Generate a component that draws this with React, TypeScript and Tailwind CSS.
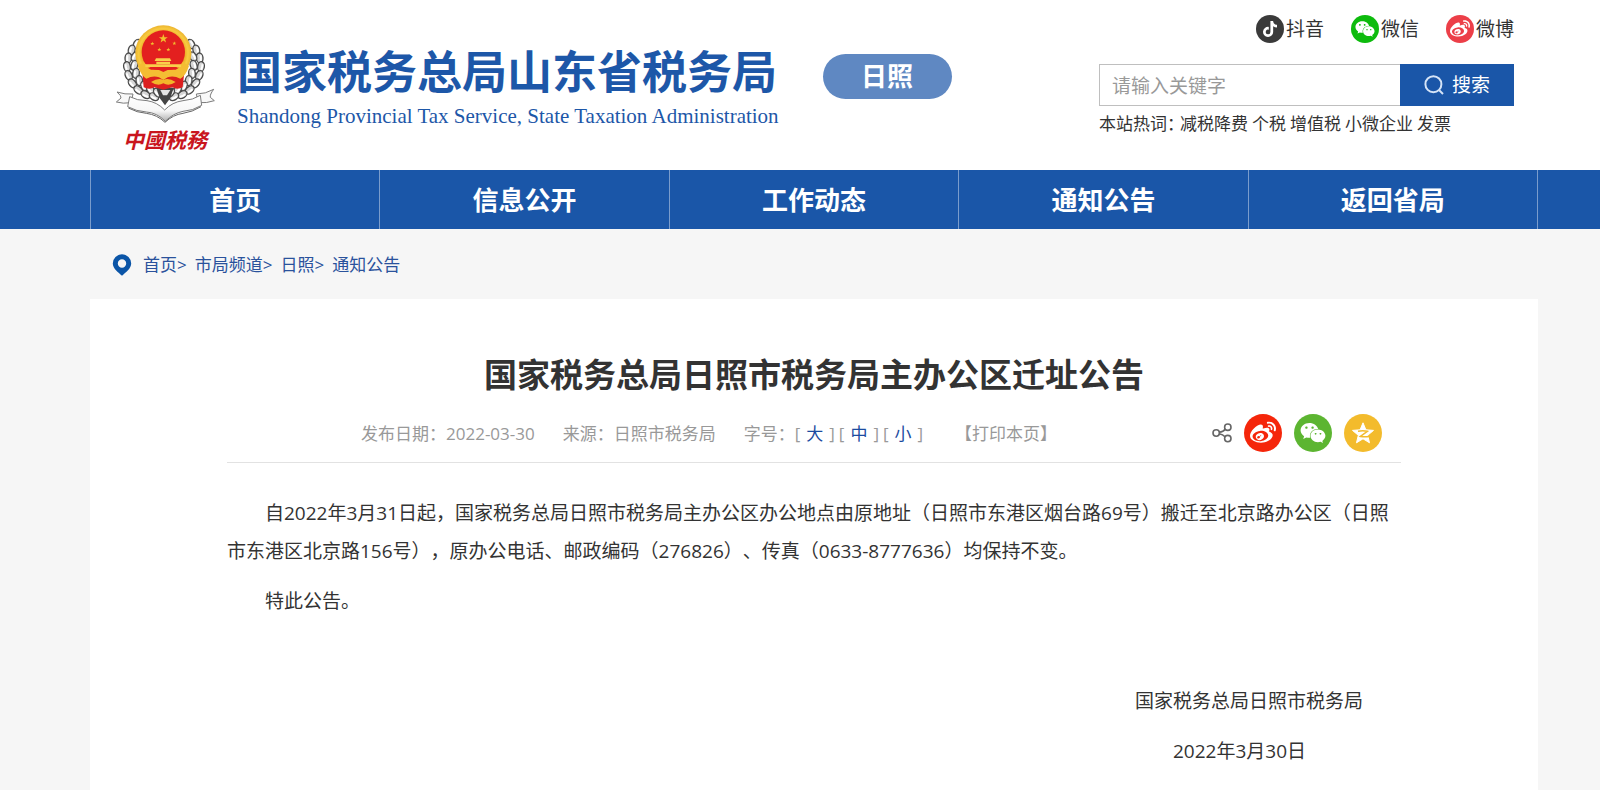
import type { ReactNode } from 'react';
import { FaTiktok, FaWeibo, FaWeixin } from 'react-icons/fa';

const NAV_ITEMS = ['首页', '信息公开', '工作动态', '通知公告', '返回省局'];
const HOT_WORDS = ['减税降费', '个税', '增值税', '小微企业', '发票'];
const CRUMBS = ['首页', '市局频道', '日照', '通知公告'];
const FONT_SIZES = ['大', '中', '小'];

const SOCIALS = [
  { label: '抖音', color: 'bg-[#3a3a3a]', icon: <FaTiktok className="w-4 h-4" /> },
  { label: '微信', color: 'bg-[#0dbb0d]', icon: <FaWeixin className="w-5 h-5" /> },
  { label: '微博', color: 'bg-[#ec3f48]', icon: <FaWeibo className="w-5 h-5" /> },
];

// 麦穗：左侧的坐标，右侧镜像
const LEAVES = [
  { x: 112, y: 100, r: 28 },
  { x: 96, y: 118, r: 14 },
  { x: 86, y: 142, r: 4 },
  { x: 106, y: 138, r: 30 },
  { x: 82, y: 168, r: -10 },
  { x: 104, y: 164, r: 18 },
  { x: 87, y: 194, r: -24 },
  { x: 109, y: 188, r: 8 },
  { x: 98, y: 218, r: -38 },
  { x: 119, y: 210, r: -6 },
  { x: 116, y: 238, r: -50 },
  { x: 134, y: 226, r: -20 },
  { x: 138, y: 252, r: -60 },
  { x: 153, y: 238, r: -34 },
  { x: 163, y: 258, r: -60 },
  { x: 174, y: 246, r: -40 },
];

const STAR = '0,-14 3.3,-4.5 13.3,-4.3 5.3,1.7 8.2,11.3 0,5.6 -8.2,11.3 -5.3,1.7 -13.3,-4.3 -3.3,-4.5';

const Wheat = () => (
  <g>
    {LEAVES.map((l) => (
      <g key={`${l.x}-${l.y}`} transform={`translate(${l.x} ${l.y}) rotate(${l.r})`}>
        <ellipse rx="10" ry="15" fill="#d6d6d6" stroke="#4a4a4a" strokeWidth="4" />
        <path d="M-3 -8 Q-5 0 -2 9" fill="none" stroke="#fff" strokeWidth="6" />
      </g>
    ))}
  </g>
);

const Emblem = () => (
  <svg viewBox="46 40 300 300" className="w-[100px] h-[100px]" aria-hidden="true">
    <defs>
      <linearGradient id="ribbon" x1="0" y1="0" x2="0" y2="1">
        <stop offset="0" stopColor="#ffffff" />
        <stop offset="0.6" stopColor="#f6f6f6" />
        <stop offset="1" stopColor="#b0b0b0" />
      </linearGradient>
      <radialGradient id="gold" gradientUnits="userSpaceOnUse" cx="191" cy="128" r="86">
        <stop offset="0.72" stopColor="#eaa520" />
        <stop offset="0.86" stopColor="#f8cb40" />
        <stop offset="1" stopColor="#eab02c" />
      </radialGradient>
    </defs>
    <Wheat />
    <g transform="translate(386 0) scale(-1 1)">
      <Wheat />
    </g>
    <path d="M170 232 H222 L212 262 L196 284 L180 262Z" fill="#444" />
    <path d="M182 238 L190 254 H202 L212 238Z" fill="#e4e4e4" />
    <circle cx="191" cy="128" r="84" fill="url(#gold)" />
    <path d="M128 184 Q190 200 254 184 L249 230 Q232 238 218 230 L191 237 L164 230 Q150 238 132 230Z" fill="#dc1f1f" />
    <circle cx="191" cy="124" r="65" fill="#e3201f" />
    <path d="M114 166 L132 154 Q150 178 178 178 L191 184 L204 178 Q232 178 250 154 L268 166 Q258 196 242 204 Q222 194 204 200 L191 208 L178 200 Q160 194 140 204 Q124 194 114 166Z" fill="#f4bd33" />
    <path d="M154 214 Q176 200 191 208 Q206 200 228 214 Q208 228 191 218 Q174 228 154 214Z" fill="#f2b52a" />
    <path d="M165 151 L169 143 H211 L215 151Z M170 153 H211 V160 H170Z M137 161 H244 V169 H137Z" fill="#f9cf4a" />
    <path d="M144 171 H238 L228 177 H154Z" fill="#e3201f" />
    <g fill="#f2c02e">
      <polygon points={STAR} transform="translate(191 84)" />
      <polygon points={STAR} transform="translate(158 99) scale(.45)" />
      <polygon points={STAR} transform="translate(224 98) scale(.45)" />
      <polygon points={STAR} transform="translate(179 117) scale(.45)" />
      <polygon points={STAR} transform="translate(206 117) scale(.45)" />
    </g>
    <g stroke="#7c7c7c" strokeWidth="3" strokeLinejoin="round">
      <path d="M100 250 Q76 252 52 244 Q66 256 64 262 L50 274 Q70 280 94 276Z" fill="#f8f8f8" />
      <path d="M290 250 Q318 250 342 236 Q330 252 332 260 L344 270 Q322 278 296 276Z" fill="#f8f8f8" />
      <path
        d="M90 258 Q112 270 142 270 Q172 274 195 298 Q218 274 250 270 Q280 268 302 254 L306 284 Q280 300 250 302 Q220 308 197 332 Q172 306 140 304 Q110 302 84 288Z"
        fill="url(#ribbon)"
      />
      <path d="M86 292 Q112 306 140 308 Q172 312 196 335" fill="none" stroke="#666" />
      <path d="M304 288 Q278 304 250 308 Q220 312 196 335" fill="none" stroke="#666" />
    </g>
  </svg>
);

const PinIcon = () => (
  <svg viewBox="0 0 20 22" className="w-5 h-[22px] shrink-0" aria-hidden="true">
    <path
      fillRule="evenodd"
      fill="#0b55a7"
      d="M10 0.3a9.2 9.2 0 0 0-9.2 9.2c0 5.2 5.4 8.6 9.2 12.3 3.8-3.7 9.2-7.1 9.2-12.3A9.2 9.2 0 0 0 10 .3Zm0 5a4.2 4.2 0 1 1 0 8.4 4.2 4.2 0 0 1 0-8.4Z"
    />
  </svg>
);

const ShareIcon = () => (
  <svg viewBox="0 0 20 20" className="w-5 h-5" fill="none" stroke="#666" strokeWidth="1.6" aria-hidden="true">
    <circle cx="4.2" cy="10" r="3.2" />
    <circle cx="15.8" cy="4.2" r="3.2" />
    <circle cx="15.8" cy="15.6" r="3.2" />
    <path d="M7.2 9.2 Q11.5 8.6 13.2 6.2 M7.2 10.8 Q11 11.4 13 13.8" />
  </svg>
);

const QzoneIcon = () => (
  <svg viewBox="0 0 24 24" className="w-6 h-6" aria-hidden="true">
    <path
      fill="#fff"
      strokeLinejoin="round"
      stroke="#fff"
      strokeWidth="1"
      d="M12 1.8l2.9 7 7.6.6-5.8 4.9 1.8 7.5-6.5-4-6.5 4 1.8-7.5-5.8-4.9 7.6-.6z"
    />
    <path d="M7 10.2 Q12 9.2 16.4 10.3 L9.4 15.4 Q13.5 16.2 18 15.6" fill="none" stroke="#f3bb2c" strokeWidth="1.5" />
  </svg>
);

interface ShareButtonProps {
  label: string;
  className: string;
  children: ReactNode;
}

const ShareButton = ({ label, className, children }: ShareButtonProps) => (
  <button
    type="button"
    title={label}
    aria-label={label}
    className={`flex items-center justify-center w-[38px] h-[38px] rounded-full text-white ${className}`}
  >
    {children}
  </button>
);

const Header = () => (
  <header className="flex items-start justify-between h-[170px] pl-[115px] pr-[86px] bg-white">
    <div className="flex items-start">
      {/* 徽标 */}
      <a href="#" className="flex flex-col items-center w-[100px] pt-6">
        <Emblem />
        <span className="text-[21px] leading-8 font-bold italic text-[#c9151e]">中國税務</span>
      </a>
      <div className="flex flex-col ml-[22px] pt-[45px] text-[#1d57a8]">
        <h1 className="text-[45px] leading-[54px] font-bold whitespace-nowrap">国家税务总局山东省税务局</h1>
        <p className="font-['Liberation_Serif',serif] text-[21px] leading-[34px] whitespace-nowrap">
          Shandong Provincial Tax Service, State Taxation Administration
        </p>
      </div>
      <a
        href="#"
        className="flex items-center justify-center w-[129px] h-[45px] mt-[54px] ml-11 rounded-full bg-[#5f88c2] text-white text-[26px] font-bold"
      >
        日照
      </a>
    </div>

    {/* 社交账号与搜索 */}
    <div className="flex flex-col w-[415px] pt-[15px] text-[#333]">
      <div className="flex justify-end gap-[27px]">
        {SOCIALS.map((s) => (
          <a key={s.label} href="#" className="flex items-center gap-0.5 h-7 text-[19px]">
            <span className={`flex items-center justify-center w-7 h-7 rounded-full text-white ${s.color}`}>
              {s.icon}
            </span>
            {s.label}
          </a>
        ))}
      </div>
      <form className="flex h-[42px] mt-[21px]" onSubmit={(e) => e.preventDefault()}>
        <input
          type="text"
          aria-label="请输入关键字"
          placeholder="请输入关键字"
          className="flex-1 min-w-0 px-3 pt-0.5 border border-r-0 border-[#bfbfbf] text-[19px] placeholder:text-[#999] outline-none"
        />
        <button type="submit" className="flex items-center justify-center gap-2 w-[114px] bg-[#1a56a8] text-white text-[19px]">
          <svg viewBox="0 0 20 20" className="w-5 h-5" fill="none" stroke="#d5e4f7" strokeWidth="2" aria-hidden="true">
            <circle cx="9.4" cy="9.2" r="8" />
            <path d="M15 15 L19 19" />
          </svg>
          搜索
        </button>
      </form>
      <div className="flex gap-1 mt-1 text-[17px] leading-7 whitespace-nowrap">
        <span className="-mr-2">本站热词：</span>
        {HOT_WORDS.map((word) => (
          <a key={word} href="#">
            {word}
          </a>
        ))}
      </div>
    </div>
  </header>
);

const App = () => {
  return (
    <div className="flex flex-col min-h-screen bg-[#f6f6f6] font-['Open_Sans','Noto_Sans_CJK_SC',sans-serif] [text-spacing-trim:space-all]">
      <Header />

      {/* 主导航 */}
      <nav className="pl-[90px] pr-[62px] bg-[#1a56a8]">
        <ul className="grid grid-cols-5 border-l border-[#7a9ccc]">
          {NAV_ITEMS.map((item) => (
            <li key={item} className="border-r border-[#7a9ccc]">
              <a href="#" className="flex items-center justify-center h-[59px] pt-0.5 text-white text-[26px] font-bold">
                {item}
              </a>
            </li>
          ))}
        </ul>
      </nav>

      {/* 面包屑 */}
      <div className="flex items-center h-[70px] pt-0.5 pl-[112px] text-[17px] text-[#2a529c]">
        <PinIcon />
        <ol className="flex gap-2 ml-[11px]">
          {CRUMBS.map((crumb, i) => (
            <li key={crumb}>
              <a href="#">{crumb}</a>
              {i < CRUMBS.length - 1 && '>'}
            </li>
          ))}
        </ol>
      </div>

      <main className="flex-1 ml-[90px] mr-[62px] px-[137px] pt-[51px] bg-white">
        <h2 className="text-[33px] leading-[50px] font-bold text-center text-[#333]">
          国家税务总局日照市税务局主办公区迁址公告
        </h2>

        {/* 发布信息 */}
        <div className="flex items-center justify-between h-[63px] pt-1 pl-[134px] pr-[19px] border-b border-[#e2e2e2] text-[17px] text-[#999]">
          <div className="flex gap-7 pt-0.5 whitespace-nowrap">
            <span>发布日期：2022-03-30</span>
            <span>来源：日照市税务局</span>
            <span className="flex">
              字号：
              {FONT_SIZES.map((size) => (
                <span key={size} className="flex gap-[6px] pr-1">
                  [
                  <button type="button" className="text-[#1c4ba0]">
                    {size}
                  </button>
                  ]
                </span>
              ))}
            </span>
            <button type="button">【打印本页】</button>
          </div>
          <div className="flex items-center gap-3">
            <ShareIcon />
            <ShareButton label="微博" className="bg-[#f5260a]">
              <FaWeibo className="w-[26px] h-[26px]" />
            </ShareButton>
            <ShareButton label="微信" className="bg-[#5cb531]">
              <FaWeixin className="w-[26px] h-[26px]" />
            </ShareButton>
            <ShareButton label="QQ空间" className="bg-[#f3bb2c]">
              <QzoneIcon />
            </ShareButton>
          </div>
        </div>

        {/* 正文 */}
        <article className="flex flex-col gap-3 pt-[31px] text-[19px] leading-[38px] text-[#333]">
          <p className="indent-[38px]">
            自2022年3月31日起，国家税务总局日照市税务局主办公区办公地点由原地址（日照市东港区烟台路69号）搬迁至北京路办公区（日照市东港区北京路156号），原办公电话、邮政编码（276826）、传真（0633-8777636）均保持不变。
          </p>
          <p className="indent-[38px]">特此公告。</p>
          <p className="mt-[50px] pr-[38px] text-right">国家税务总局日照市税务局</p>
          <p className="pr-[95px] text-right">2022年3月30日</p>
        </article>
      </main>
    </div>
  );
};

export default App;
